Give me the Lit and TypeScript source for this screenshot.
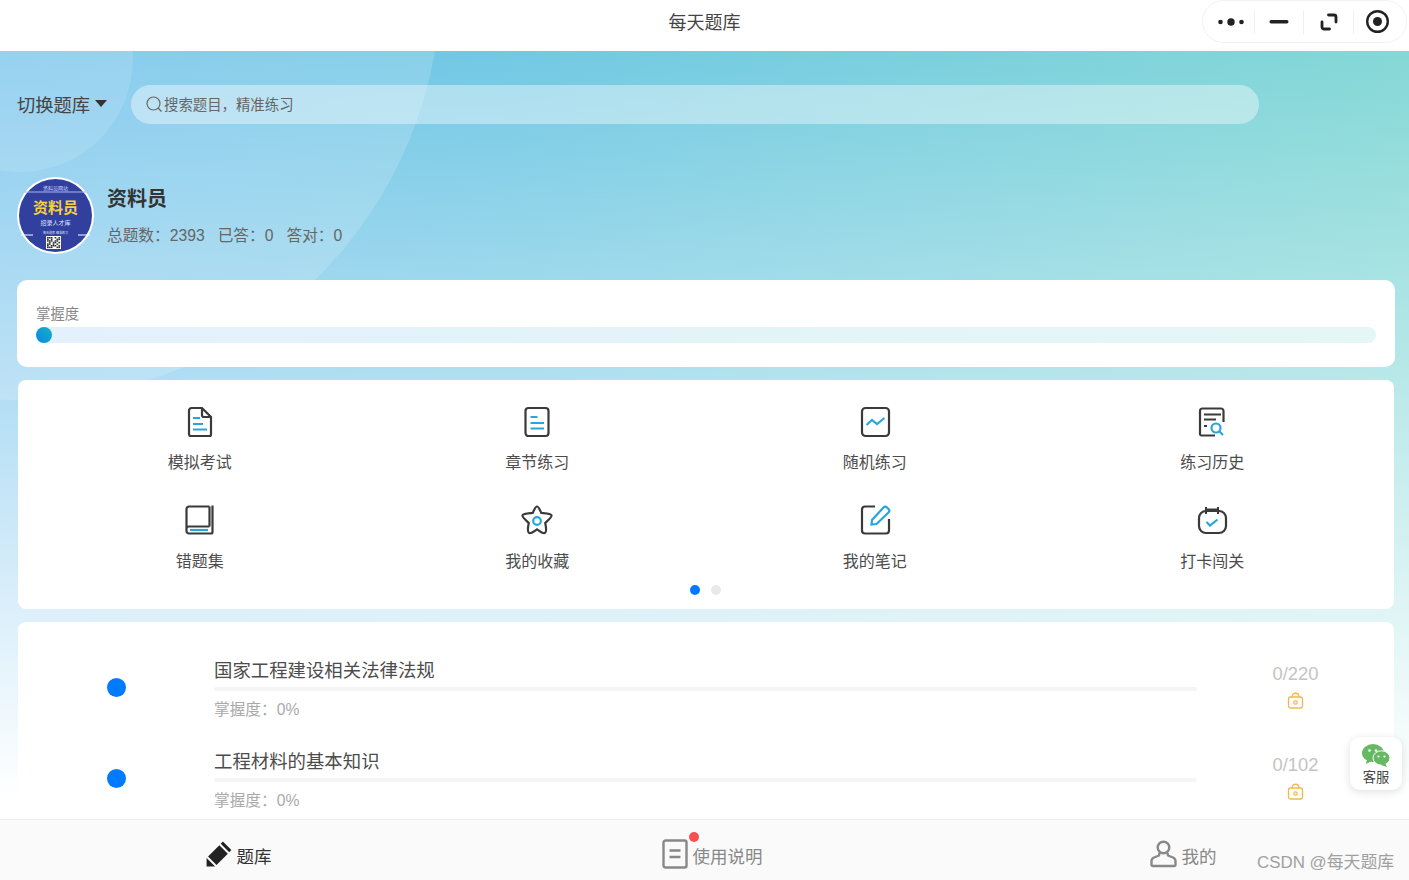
import { LitElement, html, css, svg } from "lit";
import { customElement } from "lit/decorators.js";

const ink = "#3a3a3a";
const accent = "#2aa5dc";

const gridIcons = {
  exam: svg`<path d="M7.500 2H18l9 9v17.500a1.500 1.500 0 0 1-1.500 1.500H7a2 2 0 0 1-2-2V4.500A2.500 2.500 0 0 1 7.500 2z" fill="none" stroke="${ink}" stroke-width="2.200"/><path d="M18 2v7a2 2 0 0 0 2 2h7" fill="none" stroke="${ink}" stroke-width="2.200"/><path d="M9 12h7M9 18h10M9 23.500h14" stroke="${accent}" stroke-width="2.200"/>`,
  chapter: svg`<rect x="4.500" y="2" width="23" height="28" rx="3" fill="none" stroke="${ink}" stroke-width="2.200"/><path d="M9.500 11h7M9.500 17h13.500M9.500 22.500h13.500" stroke="${accent}" stroke-width="2.200"/>`,
  random: svg`<rect x="3" y="2" width="27" height="28" rx="3.500" fill="none" stroke="${ink}" stroke-width="2.200"/><path d="M7.500 19l5.500-5 5 4 7.500-6" fill="none" stroke="${accent}" stroke-width="2.200"/>`,
  history: svg`<path d="M27.500 16V5a2.500 2.500 0 0 0-2.500-2.500H6.500A2.500 2.500 0 0 0 4 5v23a1.500 1.500 0 0 0 1.500 1.500H19" fill="none" stroke="${ink}" stroke-width="2.200"/><path d="M8 8.500h17M8 13.500h12M8 20h3" stroke="${ink}" stroke-width="2.200"/><circle cx="20" cy="22" r="4.500" fill="none" stroke="${accent}" stroke-width="2.200"/><path d="M23.500 25.500l3.500 3.500" stroke="${accent}" stroke-width="2.200"/>`,
  book: svg`<path d="M25.500 21.500H5a2.500 2.500 0 0 0-2.500 2.500M25.500 1.500H5A2.500 2.500 0 0 0 2.500 4v22A2.500 2.500 0 0 0 5 28.500h22a1.500 1.500 0 0 0 1.500-1.500V.5M25.500 1.500v20" fill="none" stroke="${ink}" stroke-width="2.200"/><path d="M6 25h18" stroke="${accent}" stroke-width="2.200"/>`,
  star: svg`<path d="M16 1.500c1.600 0 2.600 2.600 4.300 6.500 3.800.4 9.700.6 10.200 2.300.5 1.800-3.300 4.800-6.300 7.700.8 4 2 9-.4 10-2 .7-5.300-1.900-7.800-3.700-2.500 1.800-5.800 4.400-7.800 3.700-2.400-1-1.200-6-.4-10-3-2.900-6.800-5.900-6.300-7.700.5-1.700 6.400-1.900 10.200-2.300C13.400 4.100 14.400 1.500 16 1.500z" fill="none" stroke="${ink}" stroke-width="2.200"/><circle cx="16" cy="16" r="3.800" fill="none" stroke="${accent}" stroke-width="2.200"/>`,
  note: svg`<path d="M16 1.500H6A3 3 0 0 0 3 4.500v21a3 3 0 0 0 3 3h21a3 3 0 0 0 3-3V14" fill="none" stroke="${ink}" stroke-width="2.200"/><path d="M12.500 19.500l.5-4.500L24.500 2.500a2.500 2.500 0 0 1 3.500 0l1.500 1.500a2.500 2.500 0 0 1 0 3.500L17.500 19z" fill="none" stroke="${accent}" stroke-width="2.200"/>`,
  checkin: svg`<rect x="3" y="6" width="27" height="22" rx="7" fill="none" stroke="${ink}" stroke-width="2.200"/><path d="M10 2v7M22 2v7M10 4.500h12" stroke="${ink}" stroke-width="2"/><path d="M10.500 17l3.500 3.500 7.500-6" fill="none" stroke="${accent}" stroke-width="2.200"/>`,
};

const gridItems = [
  { label: "模拟考试", icon: gridIcons.exam },
  { label: "章节练习", icon: gridIcons.chapter },
  { label: "随机练习", icon: gridIcons.random },
  { label: "练习历史", icon: gridIcons.history },
  { label: "错题集", icon: gridIcons.book },
  { label: "我的收藏", icon: gridIcons.star },
  { label: "我的笔记", icon: gridIcons.note },
  { label: "打卡闯关", icon: gridIcons.checkin },
];

const chapters = [
  { title: "国家工程建设相关法律法规", count: "0/220" },
  { title: "工程材料的基本知识", count: "0/102" },
];

// qr-ish block for the avatar
const qrCells = [
  "1110101", "1010011", "1110110", "0101101", "1101010", "1011101", "1110011",
];

@customElement("app-root")
export class AppRoot extends LitElement {
  static styles = css`
    :host {
      display: flex;
      flex-direction: column;
      width: 1409px;
      height: 880px;
      overflow: hidden;
      position: relative;
      font-family: "Liberation Sans", "Noto Sans CJK SC", sans-serif;
      color: #333;
    }
    .nav {
      flex: none;
      height: 51px;
      background: #fff;
      display: flex;
      align-items: center;
      justify-content: center;
      font-size: 18px;
      padding-bottom: 10px;
      box-sizing: border-box;
      position: relative;
      color: #444;
    }
    .capsule {
      position: absolute;
      left: 1202px;
      top: 0;
      width: 205px;
      height: 43px;
      box-sizing: border-box;
      border: 1px solid #f2f2f2;
      border-radius: 22px;
      display: grid;
      grid-template-columns: 52px 49px 50px 1fr;
      align-items: center;
    }
    .capsule div {
      display: flex;
      align-items: center;
      justify-content: center;
      height: 24px;
      border-right: 1px solid #f0f0f0;
    }
    .capsule div:first-child {
      padding-left: 5px;
    }
    .capsule div:last-child {
      border-right: none;
      padding-right: 5px;
    }
    .main {
      flex: 1;
      min-height: 0;
      overflow: hidden;
      position: relative;
      padding: 34px 14px 0 17px;
      background: linear-gradient(180deg, rgba(255, 255, 255, 0) 0%, #fff 97%),
        linear-gradient(80deg, #72c0ee 0%, #72c8e4 40%, #84d8d6 100%);
    }
    .blob {
      position: absolute;
      border-radius: 50%;
      background: rgba(255, 255, 255, 0.12);
    }
    .blob.small {
      left: -93px;
      top: -105px;
      width: 226px;
      height: 226px;
    }
    .blob.large {
      left: -399px;
      top: -491px;
      width: 840px;
      height: 840px;
      background: rgba(255, 255, 255, 0.16);
    }
    .top {
      position: relative;
      display: flex;
      align-items: center;
      height: 39px;
    }
    .switch {
      width: 114px;
      flex: none;
      display: flex;
      align-items: center;
      font-size: 18.300px;
      padding-bottom: 2px;
      box-sizing: border-box;
      color: #444;
    }
    .caret {
      margin-left: 5px;
      border: 6px solid transparent;
      border-top: 7px solid #333;
      border-bottom: none;
    }
    .search {
      width: 1128px;
      height: 39px;
      border-radius: 20px;
      background: rgba(255, 255, 255, 0.4);
      display: flex;
      align-items: center;
      padding-left: 15px;
      box-sizing: border-box;
      gap: 1px;
      font-size: 14.400px;
      color: #666;
    }
    .search span {
      margin-top: -3px;
    }
    .profile {
      position: relative;
      display: flex;
      align-items: center;
      gap: 13px;
      margin: 53px 0 26px;
    }
    .avatar {
      flex: none;
      display: block;
    }
    .name {
      font-size: 20px;
      font-weight: 700;
      line-height: 28px;
      margin-bottom: 13px;
    }
    .stats {
      display: flex;
      gap: 13px;
      font-size: 15.700px;
      line-height: 20px;
      color: #666;
    }
    .card {
      position: relative;
      background: #fff;
      border-radius: 8px;
    }
    .mastery {
      height: 87px;
      padding: 26px 19px 0;
      box-sizing: border-box;
      margin-bottom: 13px;
      border-radius: 10px;
      font-size: 14.400px;
      line-height: 17px;
      color: #888;
    }
    .track {
      height: 16px;
      margin-top: 4px;
      border-radius: 8px;
      background: linear-gradient(90deg, #e3f1fc, #e4f7f6);
    }
    .thumb {
      width: 16px;
      height: 16px;
      border-radius: 50%;
      background: linear-gradient(45deg, #0a88e6, #18b0c4);
    }
    .tools {
      margin: 0 1px 13px;
      padding: 26px 13px 0;
      height: 229px;
      box-sizing: border-box;
    }
    .grid {
      display: grid;
      grid-template-columns: repeat(4, 1fr);
      row-gap: 32px;
    }
    .tool {
      display: flex;
      flex-direction: column;
      align-items: center;
      gap: 15px;
      font-size: 16px;
      line-height: 20px;
      color: #4c4c4c;
    }
    .tool svg {
      display: block;
    }
    .dots {
      display: flex;
      justify-content: center;
      gap: 11px;
      margin-top: 13px;
      padding-right: 2px;
    }
    .dot {
      width: 10px;
      height: 10px;
      border-radius: 50%;
      background: #e9e9e9;
    }
    .dot.on {
      background: #007aff;
    }
    .list {
      margin: 0 1px;
      padding-top: 20px;
    }
    .row {
      display: flex;
      align-items: center;
      height: 91px;
    }
    .bullet {
      flex: none;
      width: 196px;
      display: flex;
      justify-content: center;
    }
    .bullet i {
      width: 19px;
      height: 19px;
      border-radius: 50%;
      background: #007aff;
    }
    .body {
      width: 983px;
      flex: none;
      padding-top: 4px;
    }
    .title {
      font-size: 18.400px;
      line-height: 26px;
      color: #4c4c4c;
    }
    .bar {
      height: 4px;
      margin: 3px 0 8px;
      border-radius: 2px;
      background: #f5f5f5;
    }
    .pct {
      font-size: 15.700px;
      line-height: 22px;
      color: #aaa;
    }
    .side {
      flex: 1;
      display: flex;
      flex-direction: column;
      align-items: center;
      gap: 8px;
      margin-top: -2px;
      font-size: 18.400px;
      line-height: 20px;
      color: #c4c4c4;
    }
    .side svg {
      display: block;
    }
    .tabbar {
      flex: none;
      height: 61px;
      margin-top: -1px;
      position: relative;
      background: #fafafa;
      border-top: 1px solid #eee;
      box-sizing: border-box;
      display: grid;
      grid-template-columns: 477px 470px 1fr;
      font-size: 17.500px;
    }
    .tab {
      display: flex;
      align-items: center;
      justify-content: center;
      gap: 5px;
      color: #888;
    }
    .tab:last-child {
      padding-left: 10px;
    }
    .tab svg {
      margin-top: 7px;
    }
    .tab span {
      margin-top: 10px;
    }
    .tab.active {
      color: #333;
    }
    .badge {
      position: absolute;
      left: 689px;
      top: 832px;
      width: 10px;
      height: 10px;
      border-radius: 50%;
      background: #f65050;
    }
    .service {
      position: absolute;
      left: 1350px;
      top: 737px;
      width: 52px;
      height: 53px;
      border-radius: 10px;
      background: #fff;
      box-shadow: 0 2px 10px rgba(0, 0, 0, 0.12);
      display: flex;
      flex-direction: column;
      align-items: center;
      padding-top: 7px;
      gap: 3px;
      box-sizing: border-box;
      font-size: 13.300px;
      line-height: 16px;
      color: #444;
    }
    .mark {
      position: absolute;
      left: 1257px;
      top: 852px;
      font-size: 16.900px;
      line-height: 22px;
      color: #a0a0a0;
    }
  `;

  renderAvatar() {
    return html`<svg class="avatar" width="77" height="77" viewBox="0 0 77 77">
      <circle cx="38.500" cy="38.500" r="38.500" fill="#fff" />
      <circle cx="38.500" cy="38.500" r="36.500" fill="#31409f" />
      <text x="38.500" y="13" text-anchor="middle" font-size="5" fill="#cfd6ff">资料员网站</text>
      <path d="M8 15h61" stroke="#aab4ee" stroke-width="1" />
      <text x="38.500" y="36" text-anchor="middle" font-size="15" font-weight="700" fill="#f8d23a">资料员</text>
      <text x="38.500" y="48" text-anchor="middle" font-size="6" fill="#dfe3ff">招录人才库</text>
      <path d="M4 58h12M61 58h12" stroke="#fff" stroke-width="1" />
      <text x="38.500" y="57" text-anchor="middle" font-size="3" fill="#dfe3ff">每天题库 精准练习</text>
      <rect x="29" y="59" width="15" height="13" fill="#fff" />
      ${qrCells.map((line, y) =>
        [...line].map((c, x) =>
          c === "1" ? svg`<rect x=${30 + x * 1.9} y=${60 + y * 1.6} width="1.700" height="1.500" fill="#333" />` : null
        )
      )}
    </svg>`;
  }

  renderLock() {
    return html`<svg width="17" height="17" viewBox="0 0 17 17">
      <rect x="1.500" y="5" width="14" height="11" rx="2" fill="none" stroke="#f0b94a" stroke-width="1.300" />
      <path d="M5 5c0-5 7-5 7 0" fill="none" stroke="#f0b94a" stroke-width="1.300" />
      <circle cx="8.500" cy="10.500" r="1.700" fill="none" stroke="#f0b94a" stroke-width="1.200" />
    </svg>`;
  }

  render() {
    return html`
      <header class="nav">
        每天题库
        <div class="capsule">
          <div>
            <svg width="28" height="10" viewBox="0 0 28 10">
              <circle cx="3.500" cy="5" r="2.300" fill="#222" /><circle cx="14" cy="5" r="3.700" fill="#222" /><circle cx="24.500" cy="5" r="2.300" fill="#222" />
            </svg>
          </div>
          <div>
            <svg width="20" height="6" viewBox="0 0 20 6"><rect x="0.500" y="1" width="19" height="3.500" rx="1.700" fill="#222" /></svg>
          </div>
          <div>
            <svg width="20" height="20" viewBox="0 0 20 20">
              <path d="M9.500 3h5.500a2 2 0 0 1 2 2v5M10.500 17H5a2 2 0 0 1-2-2v-5" fill="none" stroke="#222" stroke-width="2.800" stroke-linecap="round" />
            </svg>
          </div>
          <div>
            <svg width="25" height="25" viewBox="0 0 25 25">
              <circle cx="12.500" cy="12.500" r="10.300" fill="none" stroke="#222" stroke-width="2.400" /><circle cx="12.500" cy="12.500" r="4.500" fill="#222" />
            </svg>
          </div>
        </div>
      </header>

      <main class="main">
        <div class="blob large"></div>
        <div class="blob small"></div>
        <div class="top">
          <div class="switch">切换题库<i class="caret"></i></div>
          <div class="search">
            <svg width="17" height="17" viewBox="0 0 17 17">
              <circle cx="7.500" cy="7.500" r="6.500" fill="none" stroke="#666" stroke-width="1.200" /><path d="M12 12l3.500 3.500" stroke="#666" stroke-width="1.200" />
            </svg>
            <span>搜索题目，精准练习</span>
          </div>
        </div>

        <section class="profile">
          ${this.renderAvatar()}
          <div>
            <div class="name">资料员</div>
            <div class="stats"><span>总题数：2393</span><span>已答：0</span><span>答对：0</span></div>
          </div>
        </section>

        <section class="card mastery">
          掌握度
          <div class="track"><div class="thumb"></div></div>
        </section>

        <section class="card tools">
          <div class="grid">
            ${gridItems.map(
              (item) => html`<div class="tool">
                <svg width="32" height="32" viewBox="0 0 32 32">${item.icon}</svg>
                ${item.label}
              </div>`
            )}
          </div>
          <div class="dots"><span class="dot on"></span><span class="dot"></span></div>
        </section>

        <section class="card list">
          ${chapters.map(
            (c) => html`<div class="row">
              <div class="bullet"><i></i></div>
              <div class="body">
                <div class="title">${c.title}</div>
                <div class="bar"></div>
                <div class="pct">掌握度：0%</div>
              </div>
              <div class="side">${c.count}${this.renderLock()}</div>
            </div>`
          )}
        </section>
      </main>

      <nav class="tabbar">
        <div class="tab active">
          <svg width="26" height="26" viewBox="0 0 26 26">
            <path d="M16.900 0.600L25.400 9.100L23.240 11.240L14.760 2.760zM13.350 4.170L21.830 12.650L10.540 23.940L2.060 15.460zM0.600 17L9.100 25.400H0.600z" fill="#222" />
          </svg>
          <span>题库</span>
        </div>
        <div class="tab">
          <svg width="26" height="30" viewBox="0 0 26 30">
            <rect x="1.500" y="1.500" width="23" height="27" rx="2" fill="none" stroke="#888" stroke-width="2.400" /><path d="M7.500 11.500h11M7.500 18h11" stroke="#888" stroke-width="2.400" />
          </svg>
          <span>使用说明</span>
        </div>
        <div class="tab">
          <svg width="27" height="28" viewBox="0 0 27 28">
            <circle cx="13.500" cy="7.500" r="5.800" fill="none" stroke="#888" stroke-width="2.400" /><path d="M9.500 13l-.5 2.500-5 2c-1.500.7-2.500 1.700-2.500 3.500v3.500c0 1 .7 1.500 1.500 1.500h21c.8 0 1.500-.5 1.500-1.500V21c0-1.800-1-2.800-2.500-3.500l-5-2-.5-2.500" fill="none" stroke="#888" stroke-width="2.400" />
          </svg>
          <span>我的</span>
        </div>
      </nav>
      <span class="badge"></span>

      <aside class="service">
        <svg width="28" height="23" viewBox="0 0 28 23">
          <ellipse cx="11" cy="9" rx="11" ry="9" fill="#67b862" /><path d="M5 15l-1 5 6-3z" fill="#67b862" />
          <ellipse cx="19.500" cy="14" rx="8.500" ry="7.200" fill="#67b862" stroke="#fff" stroke-width="1" /><path d="M23 19l2 4-6-2z" fill="#67b862" />
          <circle cx="7.500" cy="6.500" r="1.300" fill="#fff" /><circle cx="14" cy="6.500" r="1.300" fill="#fff" />
          <circle cx="16.500" cy="12.500" r="1.100" fill="#fff" /><circle cx="22.500" cy="12.500" r="1.100" fill="#fff" />
        </svg>
        客服
      </aside>
      <span class="mark">CSDN @每天题库</span>
    `;
  }
}
